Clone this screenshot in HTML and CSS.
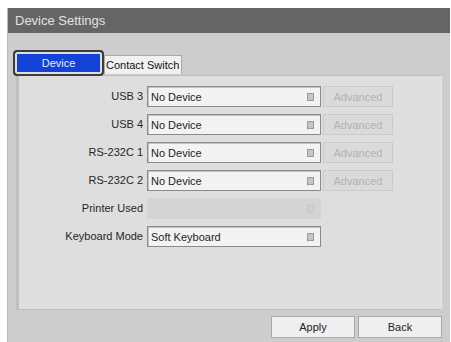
FILE: index.html
```html
<!DOCTYPE html>
<html lang="en">
<head>
  <meta charset="UTF-8" />
  <title>Device Settings</title>
  <link rel="stylesheet" href="styles.css">
</head>
<body>
  <div class="window">
    <div class="titlebar">Device Settings</div>

    <div class="tabs">
      <button class="tab active">Device</button>
      <button class="tab">Contact Switch</button>
    </div>

    <div class="panel">
      <div class="form-grid">
        <label>USB 3</label>
        <div class="select"><span>No Device</span><i class="drop"></i></div>
        <button class="adv" disabled>Advanced</button>

        <label>USB 4</label>
        <div class="select"><span>No Device</span><i class="drop"></i></div>
        <button class="adv" disabled>Advanced</button>

        <label>RS-232C 1</label>
        <div class="select"><span>No Device</span><i class="drop"></i></div>
        <button class="adv" disabled>Advanced</button>

        <label>RS-232C 2</label>
        <div class="select"><span>No Device</span><i class="drop"></i></div>
        <button class="adv" disabled>Advanced</button>

        <label>Printer Used</label>
        <div class="select disabled"><span></span><i class="drop"></i></div>
        <div></div>

        <label>Keyboard Mode</label>
        <div class="select"><span>Soft Keyboard</span><i class="drop"></i></div>
        <div></div>
      </div>
    </div>

    <div class="footer">
      <button class="btn">Apply</button>
      <button class="btn">Back</button>
    </div>
  </div>
</body>
</html>
```

FILE: styles.css
```css
body {
  margin: 0;
  background: #ffffff;
  font-family: "Liberation Sans", Arial, sans-serif;
  color: #333;
}

.window {
  margin: 8px 1px 0 7px;
  height: 340px;
  background: #cdcdcd;
  border-left: 1px solid #b9b9b9;
}

.titlebar {
  height: 25px;
  line-height: 25px;
  padding-left: 7px;
  background: #656565;
  color: #e2e2e2;
  font-size: 13px;
}

.tabs {
  display: flex;
  align-items: flex-end;
  padding: 17px 0 0 5px;
  height: 26px;
}

.tab {
  font-family: inherit;
  font-size: 11px;
  cursor: pointer;
}

.tab.active {
  width: 91px;
  height: 26px;
  border: 2px solid #3c3c3c;
  border-radius: 4px;
  background: #1243d6;
  box-shadow: inset 0 0 0 2px #dedede;
  color: #e8ecff;
}

.tab:not(.active) {
  height: 19px;
  margin-bottom: 2px;
  padding: 0 2px 0 1px;
  border: 1px solid #a8a8a8;
  border-bottom: none;
  background: #f1f1f1;
  color: #111;
}

.panel {
  margin: -1px 8px 0 8px;
  height: 233px;
  background: #dedede;
  border: 1px solid #bdbdbd;
  border-left: 3px solid #bfbfbf;
  border-right: 1px solid #e6e6e6;
}

.form-grid {
  display: grid;
  grid-template-columns: 126px 174px 70px;
  column-gap: 2px;
  row-gap: 7px;
  grid-auto-rows: 21px;
  padding-top: 10px;
  font-size: 11px;
}

.form-grid label {
  text-align: right;
  line-height: 21px;
  padding-right: 2px;
  color: #262626;
}

.select {
  display: flex;
  align-items: center;
  justify-content: space-between;
  box-sizing: border-box;
  padding: 0 6px 0 3px;
  background: #f3f3f3;
  border: 1px solid #8a8a8a;
  box-shadow: inset 1px 1px 0 #c4c4c4;
  color: #1e1e1e;
}

.select.disabled {
  background: #d4d4d4;
  border-color: #d4d4d4;
  box-shadow: none;
}

.drop {
  width: 5px;
  height: 6px;
  border: 1px solid #9a9a9a;
  background: #c6c6c6;
}

.select.disabled .drop {
  border-color: #c8c8c8;
  background: #d0d0d0;
}

.adv {
  font-family: inherit;
  font-size: 11px;
  background: #dadada;
  border: 1px solid #cacaca;
  color: #b2b2b2;
}

.footer {
  display: flex;
  justify-content: flex-end;
  gap: 3px;
  padding: 6px 8px 0 0;
}

.btn {
  width: 84px;
  height: 22px;
  font-family: inherit;
  font-size: 11px;
  background: #efefef;
  border: 1px solid #a9a9a9;
  color: #222;
  cursor: pointer;
}
```
